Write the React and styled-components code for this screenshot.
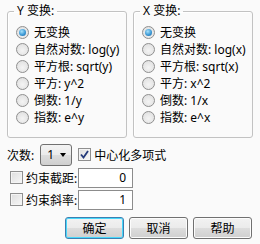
import React from "react";
import styled, { createGlobalStyle } from "styled-components";

const GlobalStyle = createGlobalStyle`
  html, body {
    margin: 0;
    padding: 0;
    background: #fafafa;
  }
  body {
    font-family: "Noto Sans", "Noto Sans CJK SC", sans-serif;
    font-size: 12px;
    color: #000;
  }
`;

const font = `"Noto Sans", "Noto Sans CJK SC", sans-serif`;

const Dialog = styled.div`
  width: 260px;
  height: 244px;
  box-sizing: border-box;
  padding: 3px 7px 0 7px;
  display: flex;
  flex-direction: column;
`;

const Groups = styled.div`
  display: flex;
  gap: 6px;
`;

const Group = styled.fieldset`
  width: 120px;
  height: 135px;
  box-sizing: border-box;
  margin: 0;
  padding: 5px 0 0 8px;
  border: 1px solid #c2c2c2;
  border-radius: 3px;
  box-shadow: inset 1px 1px 0 #fff;
  background: #fafafa;
`;

const Legend = styled.legend`
  margin-left: -2px;
  padding: 0 3px;
  line-height: 16px;
  font-family: ${font};
`;

const Options = styled.div`
  display: flex;
  flex-direction: column;
`;

const Option = styled.label`
  display: flex;
  align-items: center;
  gap: 5px;
  height: 17px;
  line-height: 17px;
  white-space: nowrap;
  font-family: ${font};
`;

const Radio = styled.span`
  width: 13px;
  height: 13px;
  box-sizing: border-box;
  border-radius: 50%;
  border: 1px solid #8f8f8f;
  background: radial-gradient(circle at 50% 60%, #f4f4f4 0%, #dcdcdc 100%);
  display: flex;
  align-items: center;
  justify-content: center;
  flex-shrink: 0;

  &::after {
    content: "";
    display: ${(p) => (p.$checked ? "block" : "none")};
    width: 7px;
    height: 7px;
    border-radius: 50%;
    background: radial-gradient(circle at 40% 35%, #a8e2fb 0%, #3d9ad6 55%, #1c5f9c 100%);
  }
`;

const Row = styled.div`
  display: flex;
  align-items: center;
  height: ${(p) => p.$h || 22}px;
  margin-top: ${(p) => p.$mt || 0}px;
  padding-left: ${(p) => p.$pl || 0}px;
  font-family: ${font};
`;

const Label = styled.span`
  white-space: nowrap;
`;

const Select = styled.div`
  width: 32px;
  height: 22px;
  box-sizing: border-box;
  border: 1px solid #707070;
  border-radius: 3px;
  background: linear-gradient(#f3f3f3 0%, #ebebeb 50%, #dddddd 51%, #cfcfcf 100%);
  display: flex;
  align-items: center;
  justify-content: space-between;
  padding: 0 5px 0 6px;
  margin-left: 6px;
  margin-right: 6px;
  font-size: 12px;
`;

const Caret = styled.span`
  width: 0;
  height: 0;
  border-left: 3.5px solid transparent;
  border-right: 3.5px solid transparent;
  border-top: 4px solid #000;
`;

const Check = styled.span`
  width: 13px;
  height: 13px;
  box-sizing: border-box;
  border: 1px solid #8f8f8f;
  background: linear-gradient(135deg, #dedede 0%, #f7f7f7 100%);
  box-shadow: inset 0 0 0 1px #f4f4f4;
  margin-right: 3px;
  flex-shrink: 0;
  display: flex;
  align-items: center;
  justify-content: center;
`;

const Input = styled.div`
  width: 55px;
  height: 20px;
  box-sizing: border-box;
  border: 1px solid #8c8c8c;
  background: #fff;
  display: flex;
  align-items: center;
  justify-content: flex-end;
  padding-right: 6px;
  margin-left: 1px;
`;

const Buttons = styled.div`
  display: flex;
  justify-content: flex-end;
  gap: 5px;
  margin-top: 7px;
  padding-right: 1px;
`;

const Button = styled.div`
  width: 59px;
  height: 22px;
  box-sizing: border-box;
  border: 1px solid ${(p) => (p.$primary ? "#3c7fb1" : "#707070")};
  border-radius: 3px;
  background: linear-gradient(#f2f2f2 0%, #ebebeb 50%, #dddddd 51%, #cfcfcf 100%);
  box-shadow: ${(p) => (p.$primary ? "inset 0 0 0 1px #48d8fb" : "inset 0 0 0 1px #fcfcfc")};
  display: flex;
  align-items: center;
  justify-content: center;
  font-family: ${font};
`;

const CheckMark = () => (
  <svg width="9" height="9" viewBox="0 0 9 9">
    <path d="M1 4.5 L3.5 7.5 L8 1" fill="none" stroke="#23397a" strokeWidth="1.8" />
  </svg>
);

const TransformGroup = ({ v }) => {
  const items = ["无变换", "自然对数: log(" + v + ")", "平方根: sqrt(" + v + ")", "平方: " + v + "^2", "倒数: 1/" + v, "指数: e^" + v];
  return (
    <Group>
      <Legend>{v.toUpperCase()} 变换:</Legend>
      <Options>
        {items.map((t, i) => (
          <Option key={i}>
            <Radio $checked={i === 0} />
            {t}
          </Option>
        ))}
      </Options>
    </Group>
  );
};

export default function App() {
  return (
    <>
      <GlobalStyle />
      <Dialog>
        <Groups>
          <TransformGroup v="y" />
          <TransformGroup v="x" />
        </Groups>
        <Row $mt={5} $h={23}>
          <Label>次数:</Label>
          <Select>
            1<Caret />
          </Select>
          <Check>
            <CheckMark />
          </Check>
          <Label>中心化多项式</Label>
        </Row>
        <Row $mt={1} $h={21} $pl={3}>
          <Check />
          <Label>约束截距:</Label>
          <Input>0</Input>
        </Row>
        <Row $mt={1} $h={21} $pl={3}>
          <Check />
          <Label>约束斜率:</Label>
          <Input>1</Input>
        </Row>
        <Buttons>
          <Button $primary>确定</Button>
          <Button>取消</Button>
          <Button>帮助</Button>
        </Buttons>
      </Dialog>
    </>
  );
}
